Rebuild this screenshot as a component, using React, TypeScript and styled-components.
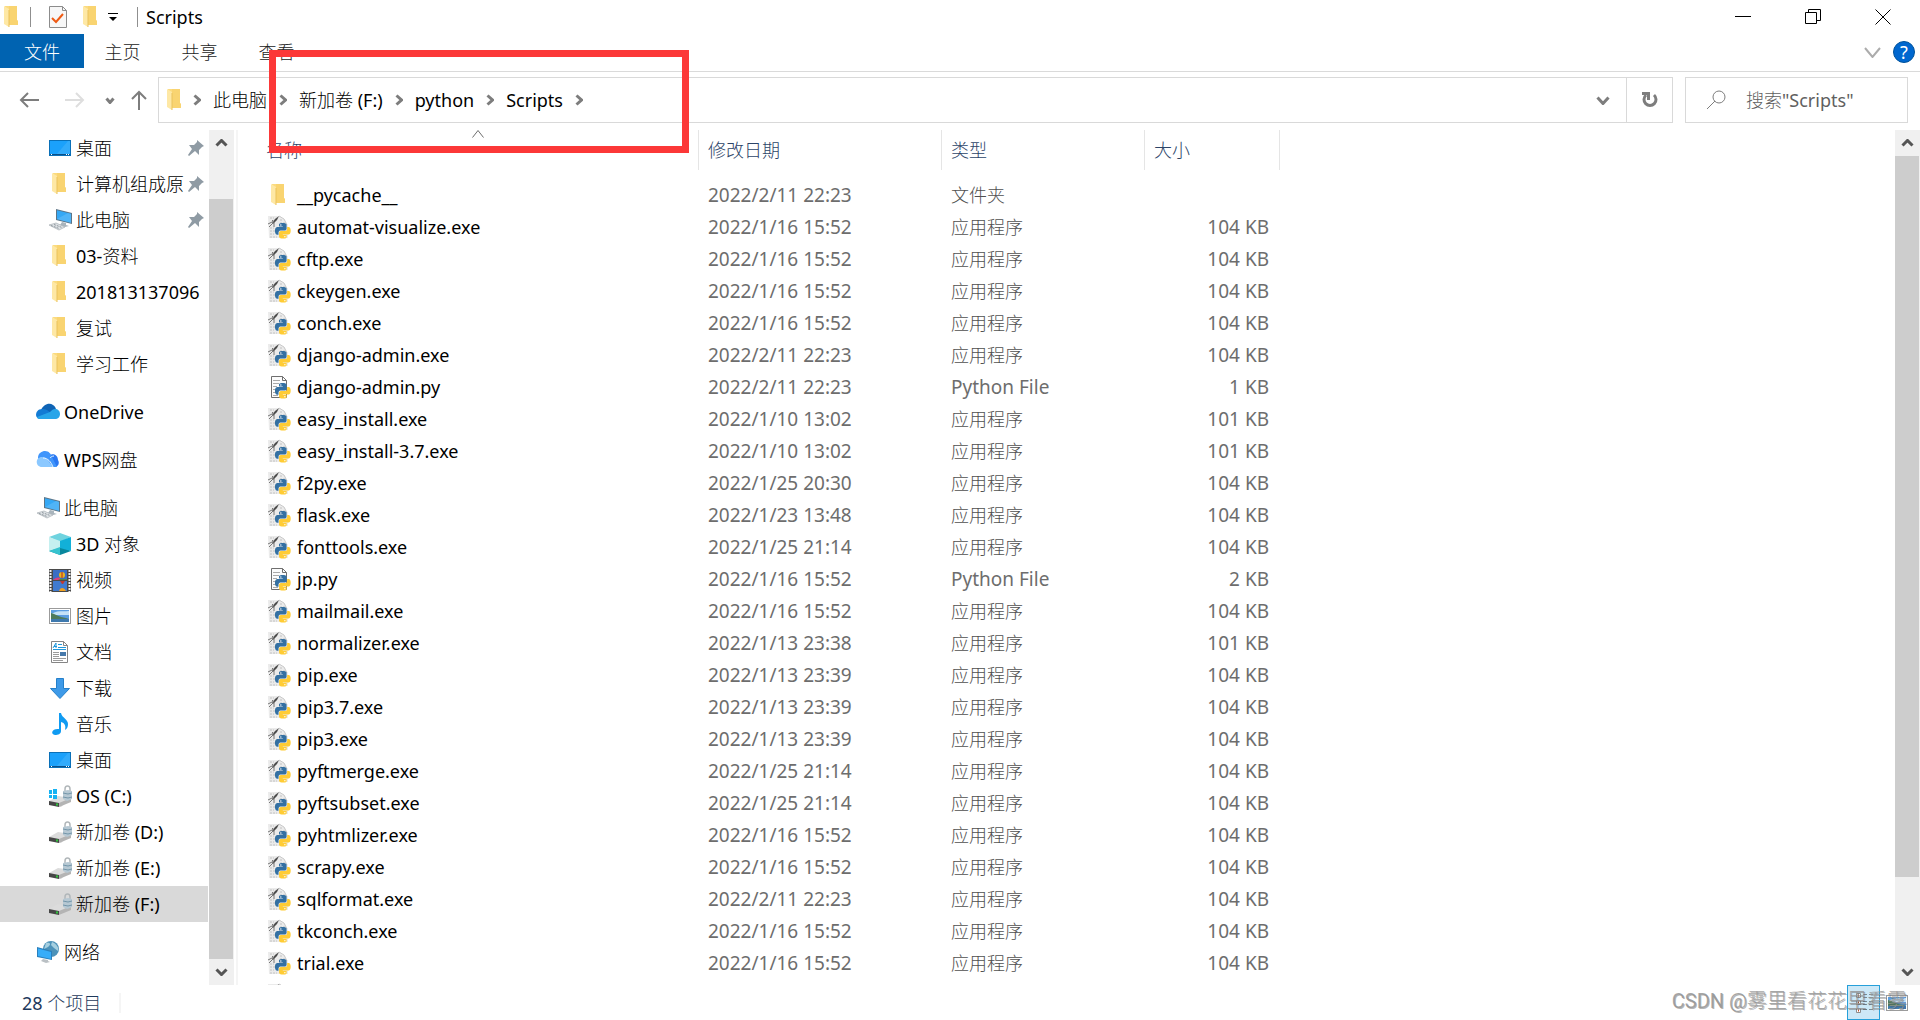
import React from "react";
import styled, { createGlobalStyle, css } from "styled-components";

const fontStack = `"Noto Sans", "Noto Sans CJK SC Light", "Noto Sans CJK SC", sans-serif`;

const GlobalStyle = createGlobalStyle`
  *, *::before, *::after { box-sizing: border-box; }
  body { margin: 0; background: #fff; }
  button, input { font: inherit; color: inherit; border: 0; background: none; padding: 0; margin: 0; }
  ul { list-style: none; margin: 0; padding: 0; }
  a { color: inherit; text-decoration: none; }
  svg { display: block; flex: none; }
`;

const Window = styled.div`
  position: relative;
  display: flex;
  flex-direction: column;
  height: 100vh;
  overflow: hidden;
  background: #fff;
  color: #000;
  font-family: ${fontStack};
  font-size: 18px;
  line-height: 24px;
`;

/* ---------- title bar ---------- */

const TitleBar = styled.header`
  display: flex;
  justify-content: space-between;
  height: 34px;
`;

const QuickAccess = styled.div`
  display: flex;
  align-items: center;
  height: 34px;
`;

const QuickButton = styled.button<{ $width: number }>`
  display: flex;
  align-items: center;
  justify-content: center;
  width: ${(p) => p.$width}px;
  height: 34px;
`;

const Divider = styled.span`
  width: 1px;
  height: 20px;
  margin-left: 8px;
  background: #8f8f8f;
`;

const Title = styled.h1`
  margin: 0 0 0 8px;
  font-size: 18px;
  font-weight: 400;
  line-height: 24px;
`;

const WindowControls = styled.div`
  display: flex;
  padding-right: 2px;
`;

const ControlButton = styled.button`
  display: flex;
  align-items: center;
  justify-content: center;
  width: 70px;
  height: 34px;
`;

/* ---------- ribbon tabs ---------- */

const Ribbon = styled.div`
  display: flex;
  align-items: flex-start;
  justify-content: space-between;
  height: 38px;
  border-bottom: 1px solid #dadada;
`;

const Tabs = styled.nav`
  display: flex;
`;

const Tab = styled.button<{ $active?: boolean }>`
  width: 77px;
  height: 34px;
  padding-top: 2px;
  color: #222;
  ${(p) =>
    p.$active &&
    css`
      width: 84px;
      background: #0063b1;
      color: #fff;
    `}
`;

const RibbonTools = styled.div`
  display: flex;
  align-items: center;
  gap: 12px;
  height: 36px;
  padding-right: 5px;
`;

const HelpButton = styled.button`
  display: flex;
  align-items: center;
  justify-content: center;
  width: 22px;
  height: 22px;
  border: 1px solid #00529b;
  border-radius: 50%;
  background: #0067cf;
  color: #fff;
  font-size: 18px;
  line-height: 20px;
`;

/* ---------- navigation bar ---------- */

const NavBar = styled.div`
  display: flex;
  gap: 12px;
  padding: 5px 12px 7px 19px;
`;

const History = styled.div`
  display: flex;
  align-items: center;
  width: 127px;
`;

const IconButton = styled.button<{ $after?: number }>`
  display: flex;
  align-items: center;
  justify-content: center;
  margin-right: ${(p) => p.$after ?? 0}px;
`;

const AddressBar = styled.div`
  display: flex;
  flex: 1;
  align-items: center;
  height: 46px;
  border: 1px solid #d9d9d9;
`;

const Crumbs = styled.nav`
  display: flex;
  flex: 1;
  align-items: center;
  gap: 12px;
  padding-left: 8px;
`;

const CrumbGap = styled.span`
  display: flex;
  width: 8px;
  justify-content: center;
`;

const AddressButton = styled.button<{ $bordered?: boolean }>`
  display: flex;
  align-items: center;
  justify-content: center;
  width: 46px;
  height: 44px;
  border-left: ${(p) => (p.$bordered ? "1px solid #d9d9d9" : "0")};
`;

const SearchBox = styled.label`
  display: flex;
  align-items: center;
  width: 223px;
  height: 46px;
  padding-left: 20px;
  gap: 20px;
  border: 1px solid #d9d9d9;
`;

const SearchInput = styled.input`
  flex: 1;
  min-width: 0;
  height: 44px;
  outline: 0;
  &::placeholder {
    color: #606060;
    opacity: 1;
  }
`;

/* ---------- body ---------- */

const Body = styled.div`
  display: flex;
  flex: 1;
  min-height: 0;
`;

const Sidebar = styled.aside`
  display: flex;
  width: 238px;
  border-right: 2px solid #f5f5f5;
`;

const Tree = styled.ul`
  flex: 1;
  min-width: 0;
  overflow: hidden;
`;

const TreeItem = styled.li<{ $root?: boolean; $spaced?: boolean; $selected?: boolean }>`
  height: 36px;
  margin-top: ${(p) => (p.$spaced ? 12 : 0)}px;
  margin-right: 1px;
  padding-left: ${(p) => (p.$root ? 36 : 48)}px;
  background: ${(p) => (p.$selected ? "#d9d9d9" : "transparent")};
`;

const TreeLink = styled.a`
  display: flex;
  align-items: center;
  gap: 4px;
  height: 36px;
  padding-right: 4px;
  white-space: nowrap;
`;

const TreeLabel = styled.span`
  flex: 1;
  min-width: 0;
`;

const ScrollBar = styled.div`
  display: flex;
  flex: none;
  flex-direction: column;
  width: 25px;
  margin-right: 2px;
  background: #f0f0f0;
`;

const MainScrollBar = styled(ScrollBar)`
  margin-right: 0;
`;

const ScrollButton = styled.button`
  display: flex;
  align-items: center;
  justify-content: center;
  height: 26px;
`;

const Track = styled.div<{ $end?: boolean }>`
  display: flex;
  flex: 1;
  flex-direction: column;
  justify-content: ${(p) => (p.$end ? "flex-end" : "flex-start")};
`;

const Thumb = styled.div<{ $percent: number }>`
  width: 24px;
  height: ${(p) => p.$percent}%;
  background: #cdcdcd;
`;

const FilePane = styled.main`
  flex: 1;
  min-width: 0;
  overflow: hidden;
`;

const FileTable = styled.table`
  width: 1042px;
  table-layout: fixed;
  border-collapse: collapse;
`;

const HeadCell = styled.th<{ $width: number }>`
  width: ${(p) => p.$width}px;
  padding: 0 0 9px;
  font-weight: 400;
`;

const SortButton = styled.button<{ $wide?: boolean }>`
  position: relative;
  display: block;
  width: 100%;
  height: 40px;
  padding-left: ${(p) => (p.$wide ? 28 : 9)}px;
  border-right: 1px solid #e5e5e5;
  color: #2c4468;
  text-align: left;
`;

const SortMark = styled.span`
  position: absolute;
  top: 0;
  left: 50%;
  margin-left: 4px;
`;

const Cell = styled.td<{ $right?: boolean; $latin?: boolean }>`
  height: 32px;
  padding: 0 11px 0 9px;
  color: ${(p) => (p.$latin ? "#6d6d6d" : "#505050")};
  font-size: ${(p) => (p.$latin ? 19 : 18)}px;
  text-align: ${(p) => (p.$right ? "right" : "left")};
  white-space: nowrap;
`;

const NameCell = styled.td`
  height: 32px;
  padding: 0 0 0 29px;
`;

const FileName = styled.div`
  display: flex;
  align-items: center;
  gap: 6px;
`;

/* ---------- status bar ---------- */

const StatusBar = styled.footer`
  display: flex;
  justify-content: space-between;
  height: 35px;
`;

const ItemCount = styled.span`
  align-self: center;
  padding: 0 18px 0 22px;
  border-right: 2px solid #f5f5f5;
  color: #1e395b;
  line-height: 20px;
`;

const ViewButtons = styled.div`
  display: flex;
  padding-right: 7px;
`;

const ViewButton = styled.button<{ $on?: boolean }>`
  display: flex;
  align-items: center;
  justify-content: center;
  width: 33px;
  height: 35px;
  border: 1px solid ${(p) => (p.$on ? "#26a0da" : "transparent")};
  background: ${(p) => (p.$on ? "#cce8f7" : "transparent")};
`;

/* ---------- overlays ---------- */

const Highlight = styled.div`
  position: absolute;
  top: 50px;
  left: 269px;
  width: 420px;
  height: 103px;
  border: 7px solid #fc3838;
  pointer-events: none;
`;

const Watermark = styled.div`
  position: absolute;
  right: 13px;
  bottom: 6px;
  color: rgba(150, 150, 150, 0.85);
  font-family: Roboto, "Noto Sans CJK SC Light", "Noto Sans CJK SC", sans-serif;
  font-size: 20px;
  line-height: 26px;
  text-shadow: 1px 1px 0 rgba(90, 90, 90, 0.45);
  white-space: nowrap;
  pointer-events: none;
`;

/* ---------- icons ---------- */

type Dir = "up" | "down" | "right";

function Chevron({ dir, size, stroke = 3, color = "#7d7d7d" }: { dir: Dir; size: number; stroke?: number; color?: string }) {
  const h = Math.round(size * 0.65);
  const vertical = dir === "right";
  const w0 = vertical ? h : size;
  const h0 = vertical ? size : h;
  const m = stroke / 2;
  const points =
    dir === "down"
      ? `${m},${m} ${w0 / 2},${h0 - m} ${w0 - m},${m}`
      : dir === "up"
        ? `${m},${h0 - m} ${w0 / 2},${m} ${w0 - m},${h0 - m}`
        : `${m},${m} ${w0 - m},${h0 / 2} ${m},${h0 - m}`;
  return (
    <svg width={w0} height={h0} viewBox={`0 0 ${w0} ${h0}`}>
      <polyline points={points} fill="none" stroke={color} strokeWidth={stroke} />
    </svg>
  );
}

const FolderIcon = ({ width = 24 }: { width?: number }) => (
  <svg width={width} height="24" viewBox={width === 24 ? "0 0 24 24" : "4 0 14 24"}>
    <path d="M5 1h12v14l1 1v4H7z" fill="#fbdb7f" />
    <path d="M9 1h8v14l1 1v4H9z" fill="#f8d26b" opacity=".7" />
    <path d="M4 1l5 3v18l-5-3z" fill="#fee8a5" />
    <path d="M9 5v17" stroke="#eac25c" strokeWidth="1" />
  </svg>
);

const BLUE_SNAKE =
  "M14.25.18l.9.2.73.26.59.3.45.32.34.34.25.34.16.33.1.3.04.26.02.2-.01.13V8.5l-.05.63-.13.55-.21.46-.26.38-.3.31-.33.25-.35.19-.35.14-.33.1-.3.07-.26.04-.21.02H8.77l-.69.05-.59.14-.5.22-.41.27-.33.32-.27.35-.2.36-.15.37-.1.35-.07.32-.04.27-.02.21v3.06H3.17l-.21-.03-.28-.07-.32-.12-.35-.18-.36-.26-.36-.36-.35-.46-.32-.59-.28-.73-.21-.88-.14-1.05-.05-1.23.06-1.22.16-1.04.24-.87.32-.71.36-.57.4-.44.42-.33.42-.24.4-.16.36-.1.32-.05.24-.01h.16l.06.01h8.16v-.83H6.18l-.01-2.75-.02-.37.05-.34.11-.31.17-.28.25-.26.31-.23.38-.2.44-.18.51-.15.58-.12.64-.1.71-.06.77-.04.84-.02 1.27.05z";
const YELLOW_SNAKE =
  "M21.1 6.11l.28.06.32.12.35.18.36.27.36.35.35.47.32.59.28.73.21.88.14 1.04.05 1.23-.06 1.23-.16 1.04-.24.86-.32.71-.36.57-.4.45-.42.33-.42.24-.4.16-.36.09-.32.05-.24.02-.16-.01h-8.22v.82h5.84l.01 2.76.02.36-.05.34-.11.31-.17.29-.25.25-.31.24-.38.2-.44.17-.51.15-.58.13-.64.09-.71.07-.77.04-.84.01-1.27-.04-1.07-.14-.9-.2-.73-.25-.59-.3-.45-.33-.34-.34-.25-.34-.16-.33-.1-.3-.04-.25-.02-.2.01-.13v-5.34l.05-.64.13-.54.21-.46.26-.38.3-.32.33-.24.35-.2.35-.14.33-.1.3-.06.26-.04.21-.02.13-.01h5.84l.69-.05.59-.14.5-.21.41-.28.33-.32.27-.35.2-.36.15-.36.1-.35.07-.32.04-.28.02-.21V6.07h2.09l.14.01z";

const Snakes = () => (
  <g transform="translate(8 8) scale(.65)">
    <path d={BLUE_SNAKE} fill="#3470a2" />
    <path d={YELLOW_SNAKE} fill="#ffcc35" />
    <circle cx="9" cy="3" r="1.1" fill="#fff" />
    <circle cx="15.2" cy="21" r="1.1" fill="#fff" />
  </g>
);

const ExeIcon = () => (
  <svg width="24" height="24" viewBox="0 0 24 24">
    <path d="M1 1h12l5 4 3 6v12H2z" fill="#ebebeb" />
    <path d="M3 13h4M3 16h5M3 19h4M3 22h7M3 3h4M13 5h2M13 8h5" stroke="#c2c2c2" strokeWidth="1" strokeDasharray="2 1" />
    <path d="M12 1l5 3 3 6" fill="none" stroke="#c9c9c9" />
    <path d="M12 1l-2 4-4 4-1-1 3-4z" fill="#4b4b4b" />
    <path d="M7 6l-6 3M6 8l-4 4M5 5l2 2v5" stroke="#777" fill="none" />
    <Snakes />
  </svg>
);

const PyIcon = () => (
  <svg width="24" height="24" viewBox="0 0 24 24">
    <path d="M4.500 1.500h11l4 4v17h-15z" fill="#fcfcfc" stroke="#6f6f6f" />
    <path d="M15.500 1.500v4h4" fill="none" stroke="#6f6f6f" />
    <path d="M6 5.500h7M6 8.500h6M6 11.500h4M6 14.500h3M6 17.500h4M6 20.500h5" stroke="#a9a9a9" />
    <Snakes />
  </svg>
);

const DesktopIcon = () => (
  <svg width="24" height="24" viewBox="0 0 24 24">
    <rect x="1.500" y="4.500" width="21" height="15" fill="#1ba1fb" stroke="#0a70b8" />
    <path d="M8 19L20 5h2v14z" fill="#4ab5fc" opacity=".5" />
    <path d="M2 18.500h20" stroke="#0b4f87" />
    <path d="M3 18.500h1M18 18.500h1M20 18.500h1" stroke="#fff" />
  </svg>
);

const ComputerIcon = () => (
  <svg width="24" height="24" viewBox="0 0 24 24">
    <path d="M8 1l16 4v11L8 12z" fill="#5c7486" />
    <path d="M9 2.300l14 3.500v9L9 11.200z" fill="#35a8f5" />
    <path d="M9 11L20 5l3 1v9z" fill="#71c4fb" opacity=".45" />
    <path d="M14 14l4 1v2l3 1-4 1-5-2z" fill="#a9b4bc" />
    <path d="M1 17l7-2 9 4-6 3z" fill="#dfe3e6" stroke="#a6adb3" strokeWidth=".7" />
    <path d="M3 17.500l8 3M6 16.500l8 3" stroke="#8d969d" strokeDasharray="2 1" />
  </svg>
);

const OneDriveIcon = () => (
  <svg width="24" height="24" viewBox="0 0 24 24">
    <path d="M5 10C7 5 13 2 17 5c2 1 3 3 3 5l-8 4z" fill="#0f64b5" />
    <path d="M6 9c-4 0-6 3-6 6 0 2 2 4 4 4l11-6-4-3c-2-1-3-1-5-1z" fill="#137bd4" />
    <path d="M19 9c3 0 5 2 5 5s-2 5-5 5H4c-2 0-3-1-3-2l13-5c2-2 3-3 5-3z" fill="#28a5e9" />
  </svg>
);

const WpsIcon = () => (
  <svg width="24" height="24" viewBox="0 0 24 24">
    <path d="M13 8c4-4 9-1 9 4 2 3 0 7-3 7h-6z" fill="#2a78f2" />
    <path d="M2 10C2 5 6 3 9 3c4 0 6 3 7 6l5 10H6z" fill="#3f95fb" />
    <path d="M6 9c4 0 6 3 8 6l3 4H6c-7 0-7-10 0-10z" fill="#8bc8ff" />
    <path d="M7 10c5 0 8 4 10 9M14 10c1-1 2-2 4-2" fill="none" stroke="#e8f4ff" />
  </svg>
);

const CubeIcon = () => (
  <svg width="24" height="24" viewBox="0 0 24 24">
    <path d="M1 5l11-4 11 4-11 5z" fill="#6fd3df" />
    <path d="M1 19l11-5 11 5-11 4z" fill="#08879d" />
    <path d="M1 5l11 4v7L1 19z" fill="#c5f0f0" />
    <path d="M23 5L12 9v7l11 3z" fill="#12b0d8" />
    <path d="M1 19l11-4v8z" fill="#36c3cf" />
  </svg>
);

const VideoIcon = () => (
  <svg width="24" height="24" viewBox="0 0 24 24">
    <rect x="1" y="1" width="22" height="23" fill="#4a4a4a" />
    <path d="M2.500 2v22M21.500 2v22" stroke="#f0f0f0" strokeWidth="2" strokeDasharray="2 1" />
    <rect x="5" y="2" width="14" height="10" fill="#3a6ec4" />
    <rect x="5" y="13" width="14" height="10" fill="#3f7bd0" />
    <path d="M5 12c2-2 4-3 7-2v2z" fill="#d8407c" />
    <path d="M10 12c3-2 5-1 9-1v1z" fill="#4a8a50" />
    <circle cx="14" cy="7" r="3" fill="#e8b51c" />
    <path d="M14 4v6" stroke="#b5202c" />
    <path d="M12 13h5l-2 3h-1z" fill="#c23a30" />
    <path d="M11 23c1-4 5-4 7 0z" fill="#f0a020" />
  </svg>
);

const PictureIcon = () => (
  <svg width="24" height="24" viewBox="0 0 24 24">
    <rect x="1.500" y="4.500" width="21" height="15" fill="#fff" stroke="#9b9b9b" />
    <rect x="3" y="6" width="18" height="12" fill="#5b9de0" />
    <path d="M3 10c7-4 12-2 18-3v4H3z" fill="#c5e2f7" />
    <path d="M3 9c4 1 8 4 15 5l3 1H3z" fill="#4d7a5c" />
    <path d="M3 15h18v3H3z" fill="#3e79ae" />
  </svg>
);

const DocumentIcon = () => (
  <svg width="24" height="24" viewBox="0 0 24 24">
    <path d="M3.500 1.500h12l4 4v17h-16z" fill="#fff" stroke="#858585" />
    <path d="M15.500 1.500v4h4" fill="none" stroke="#858585" />
    <path d="M5 8l3-5v5M6 6.500h3M10 4.500h4M10 7.500h8M5 9.500h13" stroke="#1f97dc" fill="none" />
    <path d="M5 12.500h6M5 14.500h6M5 16.500h6M5 18.500h13M5 20.500h10" stroke="#9b9b9b" />
    <rect x="12" y="12" width="6" height="4" fill="#4679ab" />
  </svg>
);

const DownloadIcon = () => (
  <svg width="24" height="24" viewBox="0 0 24 24">
    <path d="M8.500 2.500h7v10h6L12 22.500 2.500 12.500h6z" fill="#3e9ae8" stroke="#2580ca" />
  </svg>
);

const MusicIcon = () => (
  <svg width="24" height="24" viewBox="0 0 24 24">
    <path d="M11 1h2c1 5 7 6 7 11 0 3-1 5-3 6 1-4 0-7-4-8v9c0 3-3 4-6 4-5-1-3-7 4-6z" fill="#109bf2" />
  </svg>
);

const DriveIcon = ({ system }: { system?: boolean }) => (
  <svg width="24" height="24" viewBox="0 0 24 24">
    <path d="M1 17l9-5 13 2-10 9-12-3z" fill="#dcdcdc" />
    <path d="M1 17l10 2v4L1 21z" fill="#464646" />
    <path d="M11 19l12-5v4l-12 5z" fill="#b4b4b4" />
    <path d="M8 20.500h2" stroke="#2fc33a" strokeWidth="2" />
    <path d="M17 8V5c0-4 5-4 5 0v3" fill="none" stroke="#b1b7ba" strokeWidth="1.500" />
    <path d="M15 7l5-1 4 1v8l-5 2-4-2z" fill="#b6c8d3" />
    <path d="M15 9l5 1 4-1M15 13l5 1 4-1" stroke="#7395a9" fill="none" />
    {system && (
      <path d="M1 6h3v4H1zM5 5h4v5H5zM1 11h3v3H1zM5 11h4v4H5z" fill="#16b3f3" />
    )}
  </svg>
);

const NetworkIcon = () => (
  <svg width="24" height="24" viewBox="0 0 24 24">
    <circle cx="15" cy="9" r="8" fill="#4d92b9" />
    <path d="M10 3c5-1 5 2 2 4l-4 2M16 2c5 2 7 6 6 9l-4-3-3-3z" fill="#a5cfe0" />
    <path d="M1 7l15 4v9L1 17z" fill="#2a80bd" />
    <path d="M2 8.500l13 3.500v7L2 16z" fill="#37adf9" />
    <path d="M7 19l5 1v1l2 1-4 1-5-2z" fill="#bac0c4" />
  </svg>
);

const PinIcon = () => (
  <svg width="16" height="16" viewBox="0 0 16 16">
    <path d="M9 0l7 6-2 1-3 3v5L7 11l-6 5-1-1 4-6-3-4h5l3-3z" fill="#8f9ba4" />
  </svg>
);

const TaskIcon = () => (
  <svg width="18" height="24" viewBox="0 0 18 24">
    <path d="M.500 1.500h13l4 4v17H.500z" fill="#f7f7f7" stroke="#8c8c8c" />
    <path d="M13.500 1.500v4h4" fill="none" stroke="#8c8c8c" />
    <path d="M3 13l4 4 7-8" fill="none" stroke="#ee5a14" strokeWidth="2" />
  </svg>
);

const ArrowIcon = ({ color, up }: { color: string; up?: boolean }) =>
  up ? (
    <svg width="16" height="20" viewBox="0 0 16 20">
      <path d="M8 20V2M1 9l7-7 7 7" fill="none" stroke={color} strokeWidth="2" />
    </svg>
  ) : (
    <svg width="20" height="16" viewBox="0 0 20 16">
      <path d="M20 8H2M9 1L2 8l7 7" fill="none" stroke={color} strokeWidth="2" />
    </svg>
  );

const Mirrored = styled.span`
  display: flex;
  transform: scaleX(-1);
`;

/* ---------- data ---------- */

interface TreeNode {
  label: string;
  icon: React.ReactNode;
  root?: boolean;
  spaced?: boolean;
  pinned?: boolean;
  selected?: boolean;
}

const tree: TreeNode[] = [
  { label: "桌面", icon: <DesktopIcon />, pinned: true },
  { label: "计算机组成原", icon: <FolderIcon />, pinned: true },
  { label: "此电脑", icon: <ComputerIcon />, pinned: true },
  { label: "03-资料", icon: <FolderIcon /> },
  { label: "201813137096", icon: <FolderIcon /> },
  { label: "复试", icon: <FolderIcon /> },
  { label: "学习工作", icon: <FolderIcon /> },
  { label: "OneDrive", icon: <OneDriveIcon />, root: true, spaced: true },
  { label: "WPS网盘", icon: <WpsIcon />, root: true, spaced: true },
  { label: "此电脑", icon: <ComputerIcon />, root: true, spaced: true },
  { label: "3D 对象", icon: <CubeIcon /> },
  { label: "视频", icon: <VideoIcon /> },
  { label: "图片", icon: <PictureIcon /> },
  { label: "文档", icon: <DocumentIcon /> },
  { label: "下载", icon: <DownloadIcon /> },
  { label: "音乐", icon: <MusicIcon /> },
  { label: "桌面", icon: <DesktopIcon /> },
  { label: "OS (C:)", icon: <DriveIcon system /> },
  { label: "新加卷 (D:)", icon: <DriveIcon /> },
  { label: "新加卷 (E:)", icon: <DriveIcon /> },
  { label: "新加卷 (F:)", icon: <DriveIcon />, selected: true },
  { label: "网络", icon: <NetworkIcon />, root: true, spaced: true },
];

type FileRow = [name: string, date: string, size: string];

const files: FileRow[] = [
  ["__pycache__", "2022/2/11 22:23", ""],
  ["automat-visualize.exe", "2022/1/16 15:52", "104 KB"],
  ["cftp.exe", "2022/1/16 15:52", "104 KB"],
  ["ckeygen.exe", "2022/1/16 15:52", "104 KB"],
  ["conch.exe", "2022/1/16 15:52", "104 KB"],
  ["django-admin.exe", "2022/2/11 22:23", "104 KB"],
  ["django-admin.py", "2022/2/11 22:23", "1 KB"],
  ["easy_install.exe", "2022/1/10 13:02", "101 KB"],
  ["easy_install-3.7.exe", "2022/1/10 13:02", "101 KB"],
  ["f2py.exe", "2022/1/25 20:30", "104 KB"],
  ["flask.exe", "2022/1/23 13:48", "104 KB"],
  ["fonttools.exe", "2022/1/25 21:14", "104 KB"],
  ["jp.py", "2022/1/16 15:52", "2 KB"],
  ["mailmail.exe", "2022/1/16 15:52", "104 KB"],
  ["normalizer.exe", "2022/1/13 23:38", "101 KB"],
  ["pip.exe", "2022/1/13 23:39", "104 KB"],
  ["pip3.7.exe", "2022/1/13 23:39", "104 KB"],
  ["pip3.exe", "2022/1/13 23:39", "104 KB"],
  ["pyftmerge.exe", "2022/1/25 21:14", "104 KB"],
  ["pyftsubset.exe", "2022/1/25 21:14", "104 KB"],
  ["pyhtmlizer.exe", "2022/1/16 15:52", "104 KB"],
  ["scrapy.exe", "2022/1/16 15:52", "104 KB"],
  ["sqlformat.exe", "2022/2/11 22:23", "104 KB"],
  ["tkconch.exe", "2022/1/16 15:52", "104 KB"],
  ["trial.exe", "2022/1/16 15:52", "104 KB"],
];

const kindOf = (name: string) => {
  if (name.endsWith(".exe")) return { type: "应用程序", latin: false, icon: <ExeIcon /> };
  if (name.endsWith(".py")) return { type: "Python File", latin: true, icon: <PyIcon /> };
  return { type: "文件夹", latin: false, icon: <FolderIcon /> };
};

const crumbs = ["此电脑", "新加卷 (F:)", "python", "Scripts"];

/* ---------- page ---------- */

export default function App() {
  return (
    <Window>
      <GlobalStyle />
      <TitleBar>
        <QuickAccess>
          <QuickButton $width={22} aria-label="窗口菜单">
            <FolderIcon width={14} />
          </QuickButton>
          <Divider />
          <QuickButton $width={54} aria-label="属性">
            <TaskIcon />
          </QuickButton>
          <QuickButton $width={12} aria-label="新建文件夹">
            <FolderIcon />
          </QuickButton>
          <QuickButton $width={32} aria-label="自定义快速访问工具栏">
            <svg width="10" height="10" viewBox="0 0 10 10">
              <path d="M0 1.500h10" stroke="#000" />
              <path d="M1 5h8L5 9z" fill="#000" />
            </svg>
          </QuickButton>
          <Divider />
          <Title>Scripts</Title>
        </QuickAccess>
        <WindowControls>
          <ControlButton aria-label="最小化">
            <svg width="16" height="16" viewBox="0 0 16 16">
              <path d="M0 7.500h16" stroke="#000" />
            </svg>
          </ControlButton>
          <ControlButton aria-label="还原">
            <svg width="16" height="16" viewBox="0 0 16 16">
              <path d="M.500 3.500h11v11H.500zM3.500 3.500v-3h12v11h-4" fill="none" stroke="#000" />
            </svg>
          </ControlButton>
          <ControlButton aria-label="关闭">
            <svg width="16" height="16" viewBox="0 0 16 16">
              <path d="M.500.500l15 15M15.500.500l-15 15" stroke="#000" />
            </svg>
          </ControlButton>
        </WindowControls>
      </TitleBar>

      <Ribbon>
        <Tabs>
          <Tab $active>文件</Tab>
          <Tab>主页</Tab>
          <Tab>共享</Tab>
          <Tab>查看</Tab>
        </Tabs>
        <RibbonTools>
          <IconButton aria-label="展开功能区">
            <Chevron dir="down" size={17} stroke={2} color="#acacac" />
          </IconButton>
          <HelpButton aria-label="帮助">?</HelpButton>
        </RibbonTools>
      </Ribbon>

      <NavBar>
        <History>
          <IconButton $after={26} aria-label="后退">
            <ArrowIcon color="#7d7d7d" />
          </IconButton>
          <IconButton $after={20} aria-label="前进">
            <Mirrored>
              <ArrowIcon color="#dedede" />
            </Mirrored>
          </IconButton>
          <IconButton $after={16} aria-label="最近浏览的位置">
            <Chevron dir="down" size={10} />
          </IconButton>
          <IconButton aria-label="上移">
            <ArrowIcon color="#7d7d7d" up />
          </IconButton>
        </History>
        <AddressBar>
          <Crumbs aria-label="路径">
            <FolderIcon width={14} />
            <CrumbGap>
              <Chevron dir="right" size={12} />
            </CrumbGap>
            {crumbs.map((name) => (
              <React.Fragment key={name}>
                <a href="#">{name}</a>
                <CrumbGap>
                  <Chevron dir="right" size={12} />
                </CrumbGap>
              </React.Fragment>
            ))}
          </Crumbs>
          <AddressButton aria-label="以前的位置">
            <Chevron dir="down" size={14} />
          </AddressButton>
          <AddressButton $bordered aria-label="刷新">
            <svg width="18" height="18" viewBox="0 0 18 18">
              <path d="M13 4a6 6 0 1 1-8 0" fill="none" stroke="#7d7d7d" strokeWidth="3" />
              <path d="M1 1h8v8H6V4H1z" fill="#7d7d7d" />
            </svg>
          </AddressButton>
        </AddressBar>
        <SearchBox>
          <svg width="20" height="20" viewBox="0 0 20 20">
            <circle cx="13" cy="7" r="6" fill="none" stroke="#7d7d7d" />
            <path d="M9 11l-8 8" stroke="#7d7d7d" />
          </svg>
          <SearchInput type="text" placeholder={'搜索"Scripts"'} aria-label="搜索" />
        </SearchBox>
      </NavBar>

      <Body>
        <Sidebar>
          <Tree>
            {tree.map((node, i) => (
              <TreeItem key={i} $root={node.root} $spaced={node.spaced} $selected={node.selected}>
                <TreeLink href="#">
                  {node.icon}
                  <TreeLabel>{node.label}</TreeLabel>
                  {node.pinned && <PinIcon />}
                </TreeLink>
              </TreeItem>
            ))}
          </Tree>
          <ScrollBar>
            <ScrollButton aria-label="向上滚动">
              <Chevron dir="up" size={13} color="#555" />
            </ScrollButton>
            <Track $end>
              <Thumb $percent={94.6} />
            </Track>
            <ScrollButton aria-label="向下滚动">
              <Chevron dir="down" size={13} color="#555" />
            </ScrollButton>
          </ScrollBar>
        </Sidebar>
        <FilePane>
          <FileTable>
            <thead>
              <tr>
                <HeadCell $width={461} scope="col">
                  <SortButton $wide>
                    名称
                    <SortMark>
                      <Chevron dir="up" size={12} stroke={1} color="#6d6d6d" />
                    </SortMark>
                  </SortButton>
                </HeadCell>
                <HeadCell $width={243} scope="col">
                  <SortButton>修改日期</SortButton>
                </HeadCell>
                <HeadCell $width={203} scope="col">
                  <SortButton>类型</SortButton>
                </HeadCell>
                <HeadCell $width={135} scope="col">
                  <SortButton>大小</SortButton>
                </HeadCell>
              </tr>
            </thead>
            <tbody>
              {files.map(([name, date, size]) => {
                const kind = kindOf(name);
                return (
                  <tr key={name}>
                    <NameCell>
                      <FileName>
                        {kind.icon}
                        {name}
                      </FileName>
                    </NameCell>
                    <Cell $latin>{date}</Cell>
                    <Cell $latin={kind.latin}>{kind.type}</Cell>
                    <Cell $latin $right>
                      {size}
                    </Cell>
                  </tr>
                );
              })}
              <tr>
                <NameCell>
                  <ExeIcon />
                </NameCell>
              </tr>
            </tbody>
          </FileTable>
        </FilePane>
        <MainScrollBar>
          <ScrollButton aria-label="向上滚动">
            <Chevron dir="up" size={13} color="#555" />
          </ScrollButton>
          <Track>
            <Thumb $percent={89.8} />
          </Track>
          <ScrollButton aria-label="向下滚动">
            <Chevron dir="down" size={13} color="#555" />
          </ScrollButton>
        </MainScrollBar>
      </Body>

      <StatusBar>
        <ItemCount>28 个项目</ItemCount>
        <ViewButtons>
          <ViewButton $on aria-label="详细信息">
            <svg width="20" height="24" viewBox="0 0 20 24">
              <path d="M2.500 2.500h4v4h-4zM2.500 9.500h4v4h-4zM2.500 17.500h4v4h-4z" fill="#fff" stroke="#8c8c8c" />
              <path d="M4 4.500h1M4 11.500h1M4 19.500h1" stroke="#c0502c" strokeWidth="2" />
              <path d="M9 3.500h4M15 3.500h4M9 6.500h4M15 6.500h4M9 10.500h4M15 10.500h4M9 13.500h4M15 13.500h4M9 18.500h4M15 18.500h4" stroke="#7c8a92" />
            </svg>
          </ViewButton>
          <ViewButton aria-label="大缩略图">
            <PictureIcon />
          </ViewButton>
        </ViewButtons>
      </StatusBar>

      <Highlight />
      <Watermark>CSDN @雾里看花花里看雾</Watermark>
    </Window>
  );
}
